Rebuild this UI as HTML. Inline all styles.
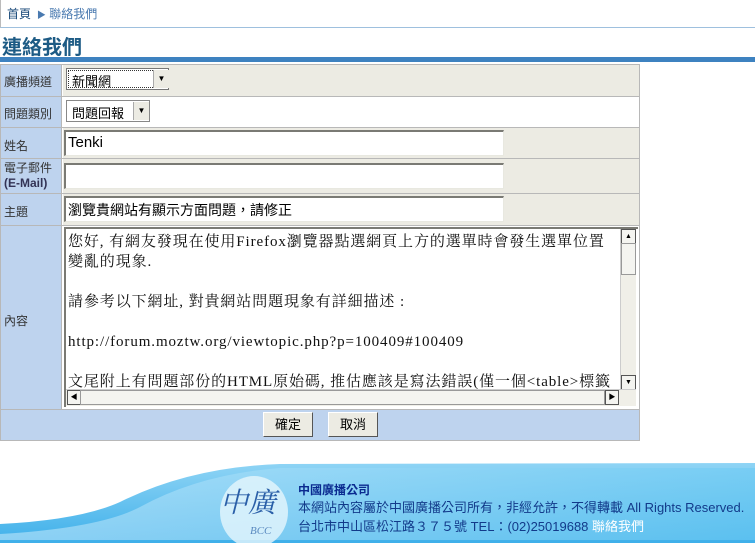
<!DOCTYPE html>
<html><head><meta charset="utf-8"><style>
body{margin:0;width:755px;height:543px;position:relative;background:#fff;font-family:"Liberation Sans","Noto Sans CJK TC",sans-serif;overflow:hidden}
.a{position:absolute}
.lab{position:absolute;left:1px;width:61px;background:#bed3ee;border-right:1px solid #b8b8b8;font-size:12px;color:#333;box-sizing:border-box;padding-left:3px}
.val{position:absolute;left:63px;width:576px;background:#ecebe3;box-sizing:border-box}
.hl{position:absolute;left:1px;width:638px;height:1px;background:#b8b8b8}
.inp{position:absolute;background:#fff;border-top:2px solid #7a7a74;border-left:2px solid #7a7a74;border-right:1px solid #e8e8e0;border-bottom:1px solid #e8e8e0;box-sizing:border-box;font-size:14px;padding:2px 2px;color:#000}
.btn{position:absolute;top:412px;height:25px;width:50px;background:#ecebe3;border:1px solid #fff;border-right-color:#555;border-bottom-color:#555;box-sizing:border-box;font-size:13px;text-align:center;line-height:23px}
</style></head><body>
<div class="a" style="left:0;top:0;width:755px;height:28px;border-bottom:1px solid #9ec0de;border-left:1px solid #bbb;box-sizing:border-box"></div>
<div class="a" style="left:7px;top:5px;font-size:12px;color:#1a4a7a">首頁 <span style="color:#4a7ab0;font-size:9px">&nbsp;▶</span> <span style="color:#4a7ab0">聯絡我們</span></div>
<div class="a" style="left:2px;top:31px;font-size:20px;font-weight:bold;color:#1d5b85">連絡我們</div>
<div class="a" style="left:0;top:57px;width:755px;height:5px;background:#3e82c0"></div>
<div class="a" style="left:0;top:64px;width:640px;height:377px;border:1px solid #b8b8b8;box-sizing:border-box"></div>

<div class="lab" style="top:65px;height:31px;padding-top:8px">廣播頻道</div>
<div class="val" style="top:65px;height:31px"></div>
<div class="a" style="left:66px;top:68px;width:103px;height:22px;border:1px solid #777;background:#fff;box-sizing:border-box;font-size:13px;padding:2px 5px;outline:1px dotted #333;outline-offset:-3px">新聞網</div>
<div class="a" style="left:153px;top:70px;width:15px;height:18px;background:#ecebe3;border-left:1px solid #aaa;font-size:8px;text-align:center;line-height:18px">▼</div>

<div class="hl" style="top:96px"></div>
<div class="lab" style="top:97px;height:30px;padding-top:8px">問題類別</div>
<div class="val" style="top:97px;height:30px;background:#fff"></div>
<div class="a" style="left:66px;top:100px;width:84px;height:22px;border:1px solid #888;box-sizing:border-box;font-size:13px;padding:2px 5px">問題回報</div>
<div class="a" style="left:133px;top:102px;width:15px;height:18px;background:#ecebe3;border-left:1px solid #aaa;font-size:8px;text-align:center;line-height:18px">▼</div>

<div class="hl" style="top:127px"></div>
<div class="lab" style="top:128px;height:30px;padding-top:9px">姓名</div>
<div class="val" style="top:128px;height:30px"></div>
<div class="inp" style="left:64px;top:130px;width:440px;height:26px;font-size:15px">Tenki</div>

<div class="hl" style="top:158px"></div>
<div class="lab" style="top:159px;height:34px;padding-top:2px;line-height:15px">電子郵件<br><b style="color:#335">(E-Mail)</b></div>
<div class="val" style="top:159px;height:34px"></div>
<div class="inp" style="left:64px;top:163px;width:440px;height:26px"></div>

<div class="hl" style="top:193px"></div>
<div class="lab" style="top:194px;height:31px;padding-top:9px">主題</div>
<div class="val" style="top:194px;height:31px"></div>
<div class="inp" style="left:64px;top:196px;width:440px;height:26px;font-size:14px">瀏覽貴網站有顯示方面問題，請修正</div>

<div class="hl" style="top:225px"></div>
<div class="lab" style="top:226px;height:183px;padding-top:86px">內容</div>
<div class="val" style="top:226px;height:183px;background:#fff"></div>
<div class="a" style="left:64px;top:227px;width:574px;height:180px;border-top:2px solid #7a7a74;border-left:2px solid #7a7a74;box-sizing:border-box;overflow:hidden;font-family:'Liberation Serif','Noto Serif CJK SC',serif;font-size:15px;letter-spacing:0.9px;line-height:20px;padding:3px 2px;color:#111;white-space:nowrap">您好, 有網友發現在使用Firefox瀏覽器點選網頁上方的選單時會發生選單位置<br>變亂的現象.<br><br>請參考以下網址, 對貴網站問題現象有詳細描述 :<br><br>http://forum.moztw.org/viewtopic.php?p=100409#100409<br><br>文尾附上有問題部份的HTML原始碼, 推估應該是寫法錯誤(僅一個&lt;table&gt;標籤</div>
<div class="a" style="left:620px;top:229px;width:15px;height:160px;background:#f0efe8;border-left:1px solid #ccc"></div>
<div class="a" style="left:621px;top:229px;width:13px;height:13px;border:1px solid #555;background:#f4f4f0;font-size:7px;text-align:center;line-height:13px">▲</div>
<div class="a" style="left:621px;top:243px;width:13px;height:30px;border:1px solid #999;background:#f4f4f0"></div>
<div class="a" style="left:621px;top:375px;width:13px;height:13px;border:1px solid #555;background:#f4f4f0;font-size:7px;text-align:center;line-height:13px">▼</div>
<div class="a" style="left:66px;top:389px;width:570px;height:16px;background:#f0efe8;border-top:1px solid #ccc"></div>
<div class="a" style="left:67px;top:390px;width:12px;height:13px;border:1px solid #555;background:#f4f4f0;font-size:7px;text-align:center;line-height:13px">◀</div>
<div class="a" style="left:80px;top:390px;width:523px;height:13px;border:1px solid #999;background:#f4f4f0"></div>
<div class="a" style="left:605px;top:390px;width:12px;height:13px;border:1px solid #555;background:#f4f4f0;font-size:7px;text-align:center;line-height:13px">▶</div>

<div class="hl" style="top:409px"></div>
<div class="a" style="left:1px;top:410px;width:638px;height:30px;background:#bed3ee"></div>
<div class="btn" style="left:263px">確定</div>
<div class="btn" style="left:328px">取消</div>

<svg class="a" style="left:0;top:462px" width="755" height="81">
<defs><linearGradient id="g" x1="0" y1="0" x2="0" y2="1"><stop offset="0" stop-color="#8fd4f5"/><stop offset="1" stop-color="#3fb0ea"/></linearGradient>
<linearGradient id="h" x1="0" y1="0" x2="1" y2="0"><stop offset="0" stop-color="#bfe6fa"/><stop offset="1" stop-color="#6ccaf3"/></linearGradient></defs>
<path d="M0 62 Q80 58 120 40 Q190 5 280 2 L755 1 L755 81 L0 81Z" fill="url(#g)"/>
<path d="M0 72 Q100 66 140 45 Q200 12 280 6 L755 6 L755 78 L0 78Z" fill="url(#h)" opacity=".6"/>
<ellipse cx="254" cy="50" rx="34" ry="36" fill="#e6f6fd" opacity=".8"/>
<text x="220" y="50" font-family="Liberation Serif,Noto Serif CJK SC,serif" font-size="28" fill="#2a5fa8" font-style="italic">中廣</text>
<text x="250" y="72" font-family="Liberation Serif,serif" font-size="11" fill="#5a8ac0" font-style="italic">BCC</text>
</svg>
<div class="a" style="left:298px;top:481px;font-size:12px;font-weight:bold;color:#0a2a90">中國廣播公司</div>
<div class="a" style="left:298px;top:497px;font-size:13px;color:#123a8a;white-space:nowrap">本網站內容屬於中國廣播公司所有，非經允許，不得轉載 All Rights Reserved.</div>
<div class="a" style="left:298px;top:516px;font-size:13px;color:#123a8a;white-space:nowrap">台北市中山區松江路３７５號 TEL：(02)25019688 <span style="color:#fff">聯絡我們</span></div>
</body></html>
